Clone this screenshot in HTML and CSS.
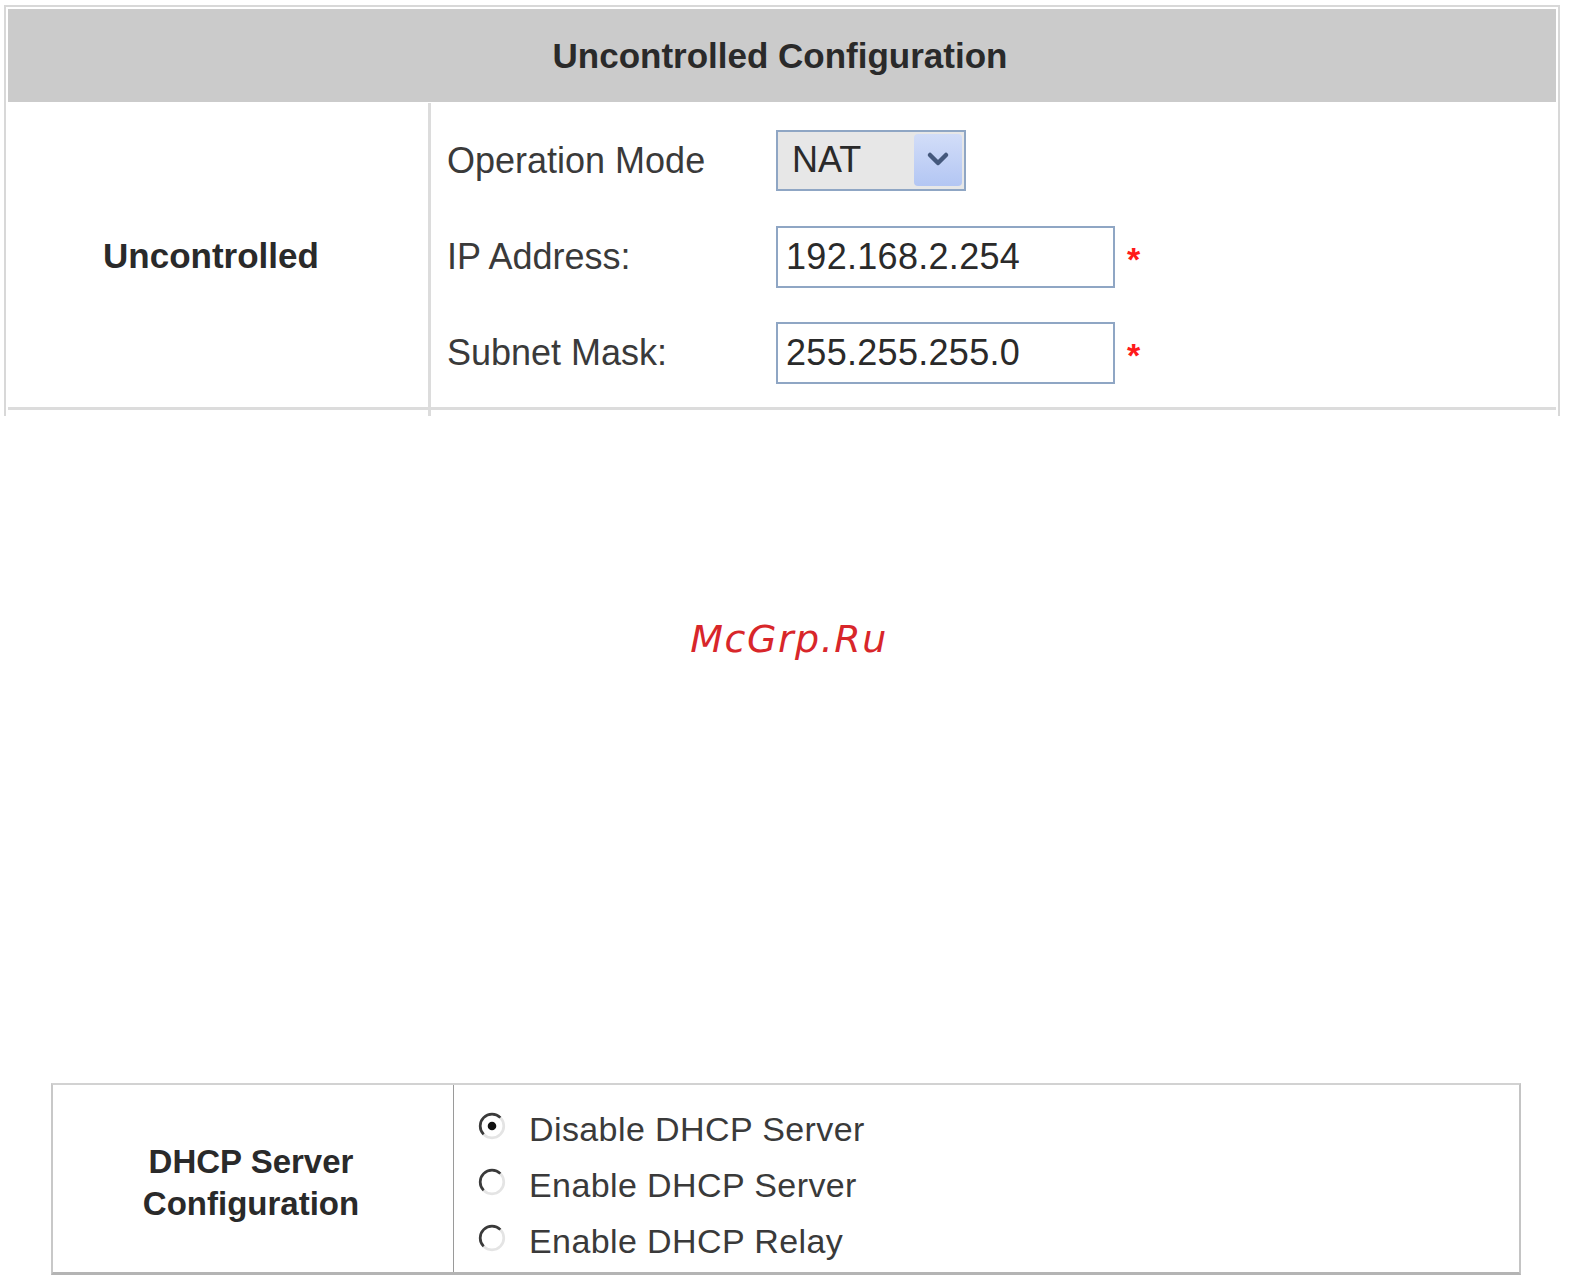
FILE: index.html
```html
<!DOCTYPE html>
<html>
<head>
  <title>Uncontrolled Configuration</title>
  <meta charset="utf-8">
  <link rel="stylesheet" href="styles.css">
</head>
<body>
  <div class="top-wrap">
    <div class="config">
      <div class="config-head">Uncontrolled Configuration</div>
      <div class="config-row">
        <div class="row-title">Uncontrolled</div>
        <div class="row-fields">
          <div class="field">
            <span class="field-label">Operation Mode</span>
            <div class="select">
              <span class="select-value">NAT</span>
              <span class="select-btn">
                <svg viewBox="0 0 48 52" width="48" height="52">
                  <path d="M16 21 L24 29 L32 21" fill="none" stroke="#44587c" stroke-width="4.5" stroke-linecap="round" stroke-linejoin="round"/>
                </svg>
              </span>
            </div>
          </div>
          <div class="field">
            <span class="field-label">IP Address:</span>
            <div class="text-input">192.168.2.254</div>
            <span class="required">*</span>
          </div>
          <div class="field">
            <span class="field-label">Subnet Mask:</span>
            <div class="text-input">255.255.255.0</div>
            <span class="required">*</span>
          </div>
        </div>
      </div>
      <div class="config-row tail">
        <div class="row-title"></div>
        <div></div>
      </div>
    </div>
  </div>

  <div class="middle">
    <span class="watermark">McGrp.Ru</span>
  </div>

  <div class="dhcp">
    <div class="dhcp-title">DHCP Server<br>Configuration</div>
    <div class="dhcp-options">
      <div class="option">
        <svg class="radio" viewBox="0 0 28 28" width="30" height="30">
          <circle cx="14" cy="14" r="11" fill="#fff" stroke="#e4e4e4" stroke-width="2.5"/>
          <path d="M21.8 6.2 A11 11 0 0 0 6.2 21.8" fill="none" stroke="#3a3a3a" stroke-width="2.5"/>
          <circle cx="14" cy="14" r="4" fill="#111"/>
        </svg>
        <span>Disable DHCP Server</span>
      </div>
      <div class="option">
        <svg class="radio" viewBox="0 0 28 28" width="30" height="30">
          <circle cx="14" cy="14" r="11" fill="#fff" stroke="#e4e4e4" stroke-width="2.5"/>
          <path d="M21.8 6.2 A11 11 0 0 0 6.2 21.8" fill="none" stroke="#3a3a3a" stroke-width="2.5"/>
        </svg>
        <span>Enable DHCP Server</span>
      </div>
      <div class="option">
        <svg class="radio" viewBox="0 0 28 28" width="30" height="30">
          <circle cx="14" cy="14" r="11" fill="#fff" stroke="#e4e4e4" stroke-width="2.5"/>
          <path d="M21.8 6.2 A11 11 0 0 0 6.2 21.8" fill="none" stroke="#3a3a3a" stroke-width="2.5"/>
        </svg>
        <span>Enable DHCP Relay</span>
      </div>
    </div>
  </div>
</body>
</html>
```

FILE: styles.css
```css
body {
  margin: 0;
  background: #fff;
  font-family: "Liberation Sans", Arial, sans-serif;
  color: #333;
}

.top-wrap {
  margin: 5px 0 0 4px;
  width: 1556px;
  height: 411px;
  overflow: hidden;
}

.config {
  border: 2px solid #d8d8d8;
  border-bottom: none;
  padding: 2px 2px 0;
}

.config-head {
  height: 93px;
  margin-bottom: 1px;
  background-color: #cbcbcb;
  display: flex;
  align-items: center;
  justify-content: center;
  font-size: 35px;
  font-weight: bold;
  color: #2a2a2a;
  padding-right: 4px;
}

.config-row {
  display: grid;
  grid-template-columns: 423px 1fr;
  border-bottom: 3px solid #dcdcdc;
}

.config-row.tail {
  height: 10px;
  border-bottom: none;
}

.row-title {
  border-right: 3px solid #dcdcdc;
  display: flex;
  align-items: center;
  justify-content: center;
  font-size: 35px;
  font-weight: bold;
  color: #2a2a2a;
  padding: 2px 14px 0 0;
}

.row-fields {
  padding: 10px 0 6px 16px;
  display: flex;
  flex-direction: column;
}

.field {
  height: 96px;
  display: flex;
  align-items: center;
}

.field-label {
  width: 329px;
  font-size: 36px;
  color: #3a3a3a;
}

.select {
  width: 170px;
  height: 57px;
  border: 2px solid #8fa6c4;
  background-color: #e7e7e7;
  display: flex;
  align-items: center;
  justify-content: space-between;
  padding: 0 2px 0 14px;
  margin-top: -2px;
}

.select-value {
  font-size: 36px;
  color: #2a2a2a;
}

.select-btn {
  width: 48px;
  height: 52px;
  border-radius: 4px;
  background: linear-gradient(#d2ddf8, #b3c6f3);
  display: flex;
}

.text-input {
  width: 327px;
  height: 58px;
  border: 2px solid #8fa6c4;
  padding-left: 8px;
  display: flex;
  align-items: center;
  font-size: 36px;
  color: #2a2a2a;
  letter-spacing: 0.3px;
}

.required {
  margin-left: 12px;
  color: #ff1a1a;
  font-size: 34px;
  font-weight: bold;
  padding-top: 4px;
}

.middle {
  height: 667px;
  box-sizing: border-box;
  padding: 199px 0 0 8px;
  text-align: center;
}

.watermark {
  font-family: "DejaVu Sans", sans-serif;
  font-style: italic;
  font-size: 38px;
  line-height: 48px;
  letter-spacing: 1.5px;
  color: #d8262a;
}

.dhcp {
  margin-left: 51px;
  width: 1470px;
  height: 192px;
  box-sizing: border-box;
  border-top: 2px solid #d2d2d2;
  border-left: 2px solid #c8c8c8;
  border-right: 2px solid #c4c4c4;
  border-bottom: 3px solid #b4b4b4;
  display: grid;
  grid-template-columns: 401px 1fr;
}

.dhcp-title {
  border-right: 1px solid #9a9a9a;
  display: flex;
  align-items: center;
  justify-content: center;
  text-align: center;
  font-size: 33px;
  font-weight: bold;
  line-height: 42px;
  color: #2a2a2a;
  padding: 9px 4px 0 0;
}

.dhcp-options {
  padding: 16px 0 0 23px;
  display: flex;
  flex-direction: column;
}

.option {
  height: 56px;
  display: flex;
  align-items: center;
  gap: 22px;
  font-size: 34px;
  color: #3a3a3a;
  letter-spacing: 0.4px;
}

.radio {
  flex-shrink: 0;
  margin-top: -6px;
}
```
